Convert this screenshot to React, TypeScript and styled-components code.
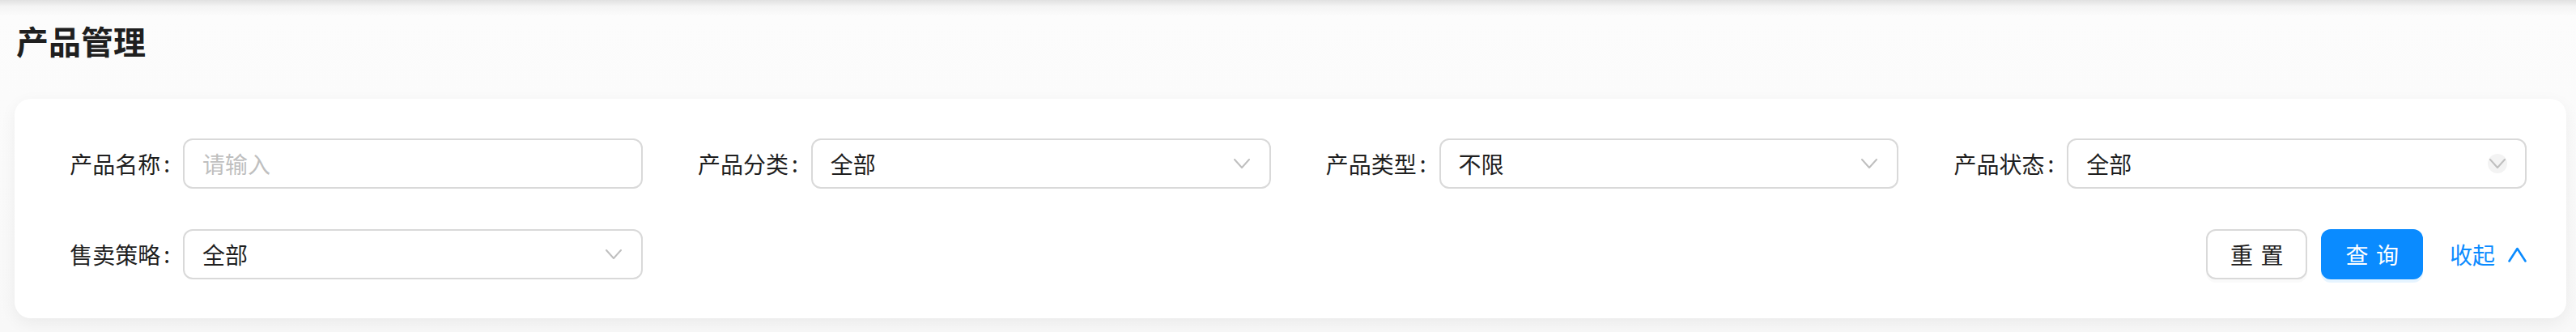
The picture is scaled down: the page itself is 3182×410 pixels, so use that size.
import React from "react";
import styled, { createGlobalStyle } from "styled-components";

const GlobalStyle = createGlobalStyle`
  html, body {
    margin: 0;
    padding: 0;
    background: #fafafa;
  }
  * { box-sizing: border-box; }
  body {
    font-family: "Noto Sans CJK SC", "Noto Sans", sans-serif;
  }
`;

const Page = styled.div`
  width: 3182px;
  min-height: 410px;
  padding: 22px 12px 17px 18px;
  background: linear-gradient(to bottom, #e1e1e1 0px, #f4f4f4 8px, #fcfcfc 20px, #fbfbfb 120px, #f8f8f8 100%);
`;

const Title = styled.h1`
  margin: 0 0 44px 2px;
  height: 56px;
  font-size: 40px;
  line-height: 56px;
  font-weight: 600;
  color: #1f1f1f;
`;

const Card = styled.div`
  background: #ffffff;
  border-radius: 20px;
  box-shadow: 0 6px 20px rgba(0, 0, 0, 0.06);
  padding: 49px 49px 48px 0;
`;

const Grid = styled.div`
  display: grid;
  grid-template-columns: repeat(4, 1fr);
  row-gap: 50px;
`;

const Item = styled.div`
  display: flex;
  align-items: center;
  height: 62px;
  min-width: 0;
`;

const Label = styled.label`
  width: 208px;
  flex: none;
  display: flex;
  justify-content: flex-end;
  align-items: center;
  font-size: 28px;
  color: #1f1f1f;
  white-space: nowrap;
  &::after {
    content: ":";
    margin: 0 16px 0 4px;
    position: relative;
    top: -1px;
  }
`;

const Field = styled.div<{ $placeholder?: boolean }>`
  flex: 1;
  min-width: 0;
  height: 62px;
  border: 2px solid #d9d9d9;
  border-radius: 12px;
  background: #fff;
  display: flex;
  align-items: center;
  padding: 0 22px;
  font-size: 28px;
  color: ${(p) => (p.$placeholder ? "#bfbfbf" : "#1f1f1f")};
`;

const Value = styled.span`
  flex: 1;
  white-space: nowrap;
`;

const Arrow = styled.span<{ $hover?: boolean }>`
  width: 24px;
  height: 24px;
  border-radius: 50%;
  background: ${(p) => (p.$hover ? "#f3f3f3" : "transparent")};
  display: flex;
  align-items: center;
  justify-content: center;
`;

const Actions = styled.div`
  grid-column: 2 / span 3;
  display: flex;
  justify-content: flex-end;
  align-items: center;
  height: 62px;
`;

const Button = styled.button<{ $primary?: boolean }>`
  height: 62px;
  padding: 0 28px;
  border-radius: 12px;
  font-family: inherit;
  font-size: 28px;
  white-space: nowrap;
  display: inline-flex;
  align-items: center;
  justify-content: center;
  cursor: pointer;
  border: 2px solid ${(p) => (p.$primary ? "#0a8bff" : "#d9d9d9")};
  background: ${(p) => (p.$primary ? "#0a8bff" : "#ffffff")};
  color: ${(p) => (p.$primary ? "#ffffff" : "#1f1f1f")};
  box-shadow: ${(p) =>
    p.$primary ? "0 4px 0 rgba(5, 145, 255, 0.1)" : "0 4px 0 rgba(0, 0, 0, 0.02)"};
  margin-left: 17px;
  & > span {
    white-space: nowrap;
    letter-spacing: 0.34em;
    margin-right: -0.34em;
  }
`;

const Toggle = styled.a`
  margin-left: 33px;
  display: flex;
  align-items: center;
  gap: 16px;
  font-size: 28px;
  color: #0a8bff;
  cursor: pointer;
  text-decoration: none;
  white-space: nowrap;
`;

const ChevronDown = () => (
  <svg width="20" height="12" viewBox="0 0 20 12" fill="none">
    <polyline points="1,1 10,11 19,1" stroke="#bfbfbf" strokeWidth="2" strokeLinejoin="round" strokeLinecap="round" />
  </svg>
);

const ChevronUp = () => (
  <svg width="23" height="19" viewBox="0 0 23 19" fill="none">
    <polyline points="1.5,17.5 11.5,2 21.5,17.5" stroke="#0a8bff" strokeWidth="2.6" strokeLinejoin="round" strokeLinecap="round" />
  </svg>
);

type SelectProps = { label: string; value: string; hover?: boolean };

const SelectItem = ({ label, value, hover }: SelectProps) => (
  <Item>
    <Label>{label}</Label>
    <Field>
      <Value>{value}</Value>
      <Arrow $hover={hover}>
        <ChevronDown />
      </Arrow>
    </Field>
  </Item>
);

export default function App() {
  return (
    <>
      <GlobalStyle />
      <Page>
        <Title>产品管理</Title>
        <Card>
          <Grid>
            <Item>
              <Label>产品名称</Label>
              <Field $placeholder>
                <Value>请输入</Value>
              </Field>
            </Item>
            <SelectItem label="产品分类" value="全部" />
            <SelectItem label="产品类型" value="不限" />
            <SelectItem label="产品状态" value="全部" hover />
            <SelectItem label="售卖策略" value="全部" />
            <Actions>
              <Button>
                <span>重置</span>
              </Button>
              <Button $primary>
                <span>查询</span>
              </Button>
              <Toggle>
                收起
                <ChevronUp />
              </Toggle>
            </Actions>
          </Grid>
        </Card>
      </Page>
    </>
  );
}
